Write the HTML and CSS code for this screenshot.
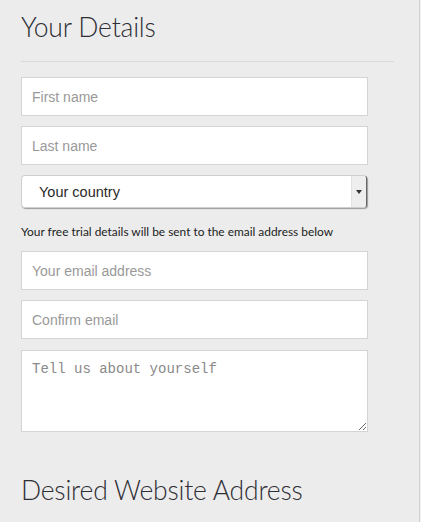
FILE: index.html
```html
<!DOCTYPE html>
<html>
<head>
<meta charset="utf-8">
<link rel="stylesheet" href="styles.css">
</head>
<body>
<div class="panel">
  <h1 class="title">Your Details</h1>
  <div class="rule"></div>
  <form class="form">
    <input class="field" type="text" placeholder="First name">
    <input class="field" type="text" placeholder="Last name">
    <div class="select">
      <span class="select-text">Your country</span>
      <span class="select-btn"><span class="arrow"></span></span>
    </div>
    <p class="note">Your free trial details will be sent to the email address below</p>
    <input class="field" type="text" placeholder="Your email address">
    <input class="field" type="text" placeholder="Confirm email">
    <textarea class="area" placeholder="Tell us about yourself"></textarea>
  </form>
  <h2 class="title title2">Desired Website Address</h2>
</div>
</body>
</html>
```

FILE: styles.css
```css
html, body {
  margin: 0;
  padding: 0;
  background: #f4f4f4;
}
.panel {
  width: 420px;
  height: 522px;
  box-sizing: border-box;
  background: #ececec;
  border-right: 1px solid #cfcfcf;
  padding: 10px 0 0 21px;
  overflow: hidden;
}
.title {
  margin: 0;
  font-family: Lato, sans-serif;
  font-weight: 300;
  font-size: 26.5px;
  line-height: 35px;
  color: #2e2e35;
  letter-spacing: -0.2px;
}
.rule {
  width: 373px;
  height: 1px;
  background: #d9d9d9;
  margin-top: 16px;
}
.form {
  display: flex;
  flex-direction: column;
  width: 347px;
  margin-top: 15px;
}
.field {
  box-sizing: border-box;
  width: 347px;
  height: 39px;
  margin: 0 0 10px 0;
  padding: 0 10px;
  border: 1px solid #d4d4d4;
  border-radius: 0;
  background: #fff;
  font-family: "Liberation Sans", Arial, sans-serif;
  font-size: 14px;
  color: #333;
  outline: none;
}
.field::placeholder {
  color: #999;
}
.select {
  box-sizing: border-box;
  width: 346px;
  height: 33px;
  display: flex;
  align-items: stretch;
  background: #fff;
  border: 1px solid #cfcfcf;
  border-right: 1px solid #666;
  border-radius: 4px;
  box-shadow: 1px 1px 1px rgba(0,0,0,0.35);
  overflow: hidden;
}
.select-text {
  flex: 1;
  display: flex;
  align-items: center;
  padding-left: 17px;
  font-family: "Liberation Sans", Arial, sans-serif;
  font-size: 14.5px;
  color: #2a2a2a;
}
.select-btn {
  width: 14px;
  background: #eeeeee;
  border-left: 1px solid #e2e2e2;
  display: flex;
  align-items: center;
  justify-content: center;
}
.arrow {
  width: 0;
  height: 0;
  border-left: 3px solid transparent;
  border-right: 3px solid transparent;
  border-top: 4px solid #333;
  margin-top: 1px;
}
.note {
  margin: 16px 0 11px 0;
  font-family: Lato, sans-serif;
  font-size: 11.9px;
  line-height: 16px;
  color: #222;
}
.area {
  box-sizing: border-box;
  width: 347px;
  height: 82px;
  margin: 1px 0 0 0;
  padding: 10px 10px;
  border: 1px solid #d4d4d4;
  border-radius: 0;
  background: #fff;
  font-family: "Liberation Mono", "Courier New", monospace;
  font-size: 14px;
  color: #333;
  resize: both;
  outline: none;
}
.area::placeholder {
  color: #8a8a8a;
}
.title2 {
  margin-top: 41px;
}
```
